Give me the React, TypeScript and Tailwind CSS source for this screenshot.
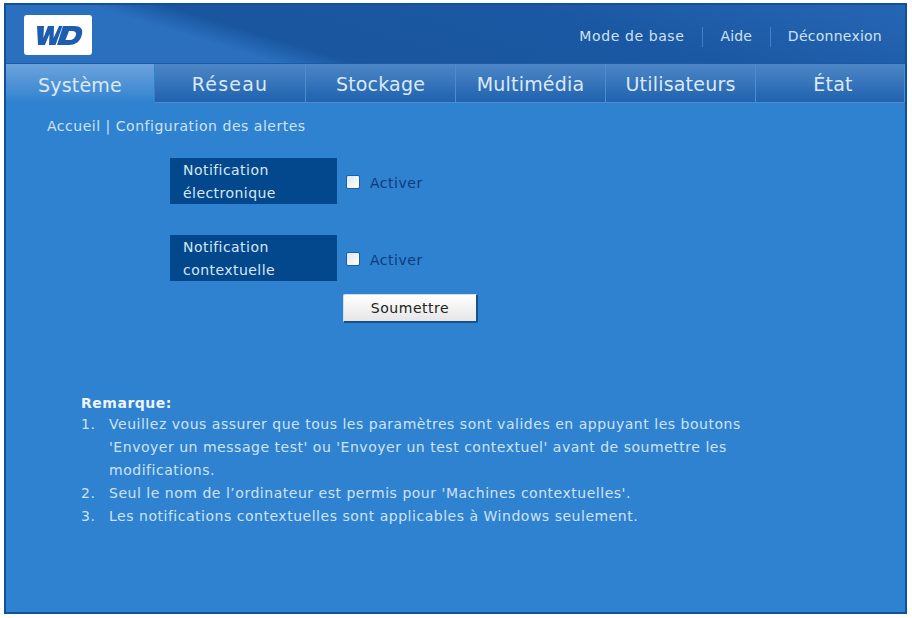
const tabs = [
  { label: "Système", w: "w-[149px]", active: true },
  { label: "Réseau", w: "w-[151px]", extra: "tracking-[1.2px]" },
  { label: "Stockage", w: "w-[150px]" },
  { label: "Multimédia", w: "w-[150px]" },
  { label: "Utilisateurs", w: "w-[150px]" },
  { label: "État", w: "flex-1", extra: "pl-[6px]" },
];

function Row({ a, b }: { a: string; b: string }) {
  return (
    <div className="flex items-center h-[46px]">
      <div className="w-[167px] h-[46px] bg-[#03488c] text-[#d8e6f5] text-[14px] leading-[23px] pl-[13px] pt-px tracking-[0.45px]">
        <div>{a}</div>
        <div>{b}</div>
      </div>
      <span className="ml-[9px] mt-[2px] w-[14px] h-[14px] bg-gradient-to-br from-[#dfe6ee] to-white border border-[#1b5fa8] rounded-[2px]" />
      <span className="ml-[10px] pt-[5px] text-[14px] text-[#0d3a7c]">Activer</span>
    </div>
  );
}

export default function App() {
  return (
    <div className="w-[912px] h-[618px] bg-white pt-[3px] pl-[4px] font-['DejaVu_Sans',sans-serif]">
      <div className="w-[903px] h-[611px] border-2 border-[#0f5299] bg-[#2e82d0] flex flex-col tracking-[0.52px]">
        <header className="h-[59px] flex items-start justify-between bg-[linear-gradient(197deg,#2566b4_0%,#1b58a3_35%,#1a569f_68%,#2a70bf_75%,#2a70be_100%)] border-b border-[#1d5aa5]">
          <div className="ml-[18px] mt-[10px] w-[68px] h-[40px] bg-white rounded-[3px] flex items-center justify-center">
            <svg width="52" height="24" viewBox="0 0 52 24">
              <path d="M5 3h7l-.6 12L16 3h6l-.4 12L27 3h3.500l-7 19h-6.500l.5-11-4.600 11H6z" fill="#1d5cae" />
              <path d="M31 3h11c7 0 9 3 8 8-1.300 7-6 11-13 11H25zm6 5-3.500 9h3.500c4 0 6-2 7-5 .5-2.500-1-4-4-4z" fill="#1d5cae" fillRule="evenodd" />
            </svg>
          </div>
          <nav className="flex items-center text-[14px] text-[#cfe2f5] mt-[21px] mr-[23px]">
            <span className="tracking-[0.6px]">Mode de base</span>
            <span className="ml-[18px] mr-[17px] w-px h-[20px] bg-[#3f82c9]" />
            <span className="tracking-[0.1px]">Aide</span>
            <span className="ml-[18px] mr-[17px] w-px h-[20px] bg-[#3f82c9]" />
            <span className="tracking-[0.25px]">Déconnexion</span>
          </nav>
        </header>
        <div className="flex h-[39px] tracking-[0.2px]">
          {tabs.map((t) => (
            <div
              key={t.label}
              className={`${t.w} ${t.extra ?? ""} flex items-center justify-center pt-[3px] text-[19px] text-[#dbe9f7] border-r ${
                t.active
                  ? "bg-gradient-to-b from-[#6ba3dc] to-[#2e82d0] border-[#2e82d0]"
                  : "bg-gradient-to-b from-[#4c86c6] to-[#1f62af] border-[#4f8ccb] border-b border-b-[#4f8ccb]"
              }`}
            >
              {t.label}
            </div>
          ))}
        </div>
        <div className="ml-[41px] mt-[14px] text-[14px] leading-[18px] text-[#cfe2f5]">
          Accueil | Configuration des alertes
        </div>
        <div className="ml-[164px] mt-[23px] flex flex-col gap-[31px]">
          <Row a="Notification" b="électronique" />
          <Row a="Notification" b="contextuelle" />
        </div>
        <button className="ml-[337px] mt-[13px] w-[135px] h-[29px] pt-px bg-gradient-to-b from-white to-[#e6e6e6] rounded-[2px] border border-[#d5dde6] border-b-2 border-b-[#174f8f] border-r-2 border-r-[#174f8f] text-[14px] text-[#222]">
          Soumettre
        </button>
        <div className="ml-[75px] mt-[70px] w-[700px] text-[14px] leading-[23px] text-[#cfe2f5]">
          <div className="font-bold text-[#eef5fc] h-[20px] leading-[20px]">Remarque:</div>
          <div className="flex">
            <span className="w-[28px] shrink-0">1.</span>
            <div>
              <div>Veuillez vous assurer que tous les paramètres sont valides en appuyant les boutons</div>
              <div>'Envoyer un message test' ou 'Envoyer un test contextuel' avant de soumettre les</div>
              <div>modifications.</div>
            </div>
          </div>
          <div className="flex"><span className="w-[28px] shrink-0">2.</span><span>Seul le nom de l’ordinateur est permis pour 'Machines contextuelles'.</span></div>
          <div className="flex"><span className="w-[28px] shrink-0">3.</span><span>Les notifications contextuelles sont applicables à Windows seulement.</span></div>
        </div>
      </div>
    </div>
  );
}
